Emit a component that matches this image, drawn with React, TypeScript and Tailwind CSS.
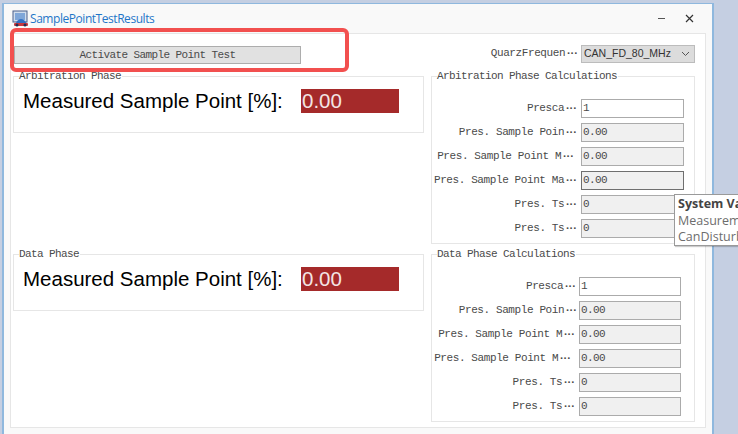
const monoBase = "font-['Liberation_Mono',monospace] text-[11px] text-[#4a4a4a] leading-none whitespace-pre";
const mono = `${monoBase} tracking-[-0.6px]`;

function Dots() {
  return <span className="tracking-[-3px] font-bold">···</span>;
}

function Group({ title, className, children }: { title: string; className: string; children: React.ReactNode }) {
  return (
    <div className={`relative border border-[#e6e6e6] ${className}`}>
      <span className={`absolute left-[5px] top-[-6px] bg-white pr-[1px] ${mono}`}>{title}</span>
      {children}
    </div>
  );
}

function Measured() {
  return (
    <div className="flex items-center pt-[12px] pl-[9px]">
      <span className="w-[278px] text-[20.5px] leading-[24px] text-black font-['Liberation_Sans',sans-serif]">
        Measured Sample Point [%]:
      </span>
      <span className="w-[98px] h-[24px] bg-[#a52a2a] pl-[1px] text-[20.5px] leading-[24px] text-[#f3e4e4] font-['Liberation_Sans',sans-serif]">
        0.00
      </span>
    </div>
  );
}

interface FieldRow {
  label: string;
  value: string;
  labelEnd: number;
  inputClass?: string;
}

function Field({ label, value, labelEnd, inputClass = "bg-[#f0f0f0] border-[#ababab]", widthClass }: FieldRow & { widthClass: string }) {
  return (
    <div className="relative flex h-[19px] items-center">
      <div className={`flex-1 text-right ${monoBase} tracking-[-0.4px]`} style={{ paddingRight: labelEnd }}>
        {label}
        <Dots />
      </div>
      <div className={`h-[19px] ${widthClass} border pl-[1px] text-[#4a4a4a] ${inputClass} flex items-center font-['Liberation_Mono',monospace] text-[11px] tracking-[-0.6px] leading-none`}>
        {value}
      </div>
    </div>
  );
}

const white = "bg-white border-[#ababab]";

const arbitration: FieldRow[] = [
  { label: "Presca", value: "1", labelEnd: 6, inputClass: white },
  { label: "Pres. Sample Poin", value: "0.00", labelEnd: 6 },
  { label: "Pres. Sample Point M", value: "0.00", labelEnd: 9 },
  { label: "Pres. Sample Point Ma", value: "0.00", labelEnd: 6, inputClass: "bg-[#f0f0f0] border-[#6f6f6f]" },
  { label: "Pres. Ts", value: "0", labelEnd: 6 },
  { label: "Pres. Ts", value: "0", labelEnd: 6 },
];

const data: FieldRow[] = [
  { label: "Presca", value: "1", labelEnd: 5, inputClass: white },
  { label: "Pres. Sample Poin", value: "0.00", labelEnd: 4 },
  { label: "Pres. Sample Point M", value: "0.00", labelEnd: 6 },
  { label: "Pres. Sample Point M", value: "0.00", labelEnd: 10 },
  { label: "Pres. Ts", value: "0", labelEnd: 6 },
  { label: "Pres. Ts", value: "0", labelEnd: 6 },
];

function AppIcon() {
  return (
    <svg width="17" height="17" viewBox="0 0 17 17" className="shrink-0">
      <rect x="1" y="1" width="14" height="11" fill="#cfdcec" stroke="#4a5f8a" />
      <rect x="3" y="3" width="10" height="7" fill="#7fa6d8" />
      <path d="M3 15 L5 11 Q9 7 13 11 L16 15 Z" fill="#2f6fc4" />
      <rect x="2" y="13" width="14" height="3" rx="1" fill="#c8383f" />
      <circle cx="5" cy="15" r="1.5" fill="#222d52" />
      <circle cx="13" cy="15" r="1.5" fill="#222d52" />
    </svg>
  );
}

export default function App() {
  return (
    <div className="relative h-[434px] w-[738px] overflow-hidden bg-[#c5cfe2] pt-[3px] pl-[2px]">
      <div className="h-[431px] w-[712px] border-l-2 border-t border-r-2 border-[#8fb8de] bg-[#f9f9f9]">
        {/* Barre de titre */}
        <div className="flex h-[29px] items-center pl-[8px] pr-[18px]">
          <AppIcon />
          <span className="ml-[1px] pt-[1px] text-[12px] text-[#1f76c8] font-['Open_Sans',sans-serif] tracking-[-0.45px]">
            SamplePointTestResults
          </span>
          <span className="ml-auto h-[1px] w-[7px] bg-[#555]" />
          <svg width="9" height="9" viewBox="0 0 9 9" className="ml-[20px]">
            <path d="M1 1 L8 8 M8 1 L1 8" stroke="#333" strokeWidth="1.2" />
          </svg>
        </div>

        {/* Contenu */}
        <div className="ml-[6px] h-[395px] w-[696px] border border-[#e6e6e6] bg-white pl-[2px] pt-[11px]">
          <div className="flex h-[20px] items-start">
            <div className={`ml-[1px] mt-[1px] flex h-[18px] w-[287px] items-center justify-center border border-[#adadad] bg-[#e1e1e1] ${mono}`}>
              Activate Sample Point Test
            </div>
            <div className={`ml-[189px] mt-[3px] w-[86px] text-right ${monoBase} tracking-[-0.4px]`}>
              QuarzFrequen<Dots />
            </div>
            <div className="ml-[5px] flex h-[18px] w-[114px] items-center justify-between border border-[#bcbcbc] bg-[#dcdcdc] pl-[2px] pr-[4px] font-['Liberation_Sans',sans-serif] text-[10.5px] text-[#333]">
              CAN_FD_80_MHz
              <svg width="9" height="6" viewBox="0 0 9 6">
                <path d="M1 1 L4.5 4.5 L8 1" fill="none" stroke="#555" />
              </svg>
            </div>
          </div>

          <div className="mt-[11px] grid grid-cols-[411px_264px] grid-rows-[167px_167px] gap-x-[7px] gap-y-[11px]">
            <div>
              <Group title="Arbitration Phase" className="h-[57px]">
                <Measured />
              </Group>
            </div>
            <Group title="Arbitration Phase Calculations" className="h-[168px]">
              <div className="flex w-[252px] flex-col gap-[5px] pt-[22px]">
                {arbitration.map((row, idx) => (
                  <Field key={idx} {...row} widthClass="w-[103px]" />
                ))}
              </div>
            </Group>
            <div>
              <Group title="Data Phase" className="h-[57px]">
                <Measured />
              </Group>
            </div>
            <Group title="Data Phase Calculations" className="h-[168px]">
              <div className="flex w-[249px] flex-col gap-[5px] pt-[22px]">
                {data.map((row, idx) => (
                  <Field key={idx} {...row} widthClass="w-[102px]" />
                ))}
              </div>
            </Group>
          </div>
        </div>
      </div>

      {/* Surlignage rouge */}
      <div className="absolute left-[10px] top-[28px] h-[44px] w-[339px] rounded-[6px] border-[4px] border-[#f2504f]" />

      {/* Tooltip */}
      <div className="absolute left-[674px] top-[194px] h-[52px] w-[120px] border border-[#9a9a9a] bg-white pl-[3px] pt-[1px] font-['Open_Sans',sans-serif] text-[12.5px] leading-[16.5px] shadow-[1px_1px_1px_rgba(0,0,0,0.2)]">
        <div className="font-bold text-[#444]">System Variable</div>
        <div className="text-[#6d6d6d]">Measurement</div>
        <div className="text-[#6d6d6d]">CanDisturbance</div>
      </div>
    </div>
  );
}
